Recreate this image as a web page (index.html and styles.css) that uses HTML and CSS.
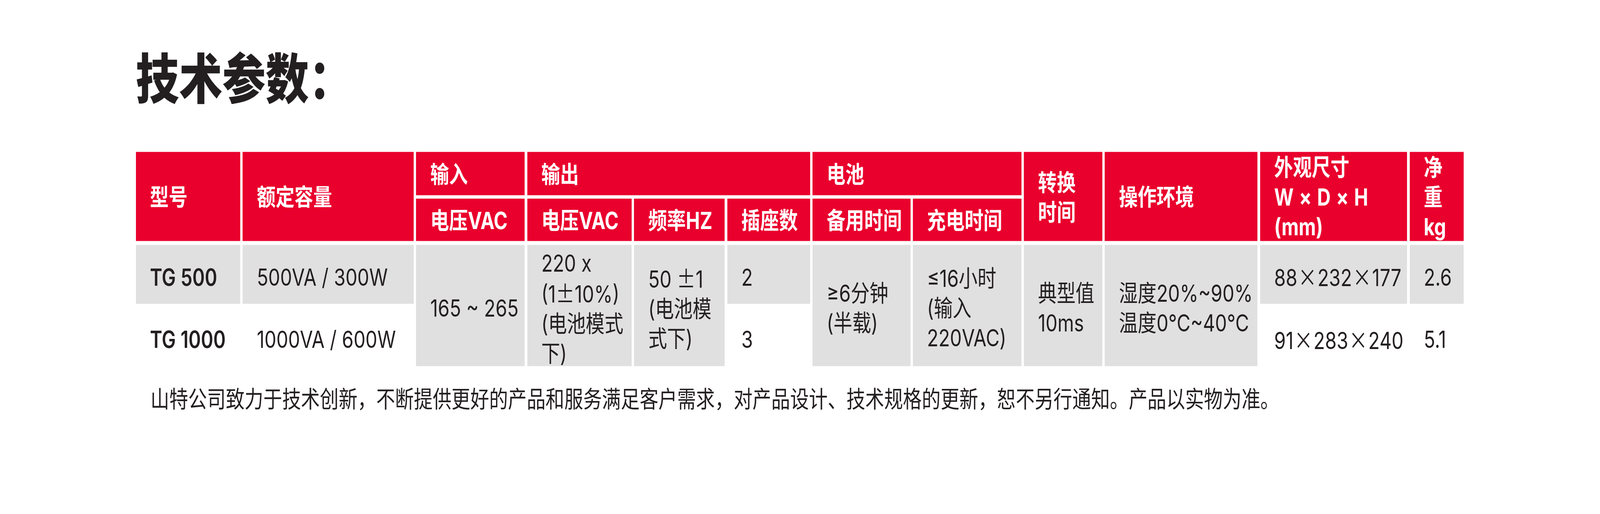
FILE: index.html
```html
<!DOCTYPE html>
<html lang="zh-CN">
<head>
<meta charset="utf-8">
<title>技术参数</title>
<link rel="stylesheet" href="styles.css">
</head>
<body>
<div class="page">
  <h1 class="title">技术参数：</h1>

  <div class="spec">
    <!-- header row 1 -->
    <div class="th c1 r12"><div>型号</div></div>
    <div class="th c2 r12"><div>额定容量</div></div>
    <div class="th c3 r1"><div>输入</div></div>
    <div class="th c-out r1"><div>输出</div></div>
    <div class="th c-bat r1"><div>电池</div></div>
    <div class="th c9 r12"><div>转换<br>时间</div></div>
    <div class="th c10 r12"><div>操作环境</div></div>
    <div class="th c11 r12"><div>外观尺寸<br><span class="wdh">W×D×H</span><br>(mm)</div></div>
    <div class="th c12 r12"><div>净<br>重<br>kg</div></div>

    <!-- header row 2 -->
    <div class="th c3 r2"><div>电压VAC</div></div>
    <div class="th c4 r2"><div>电压VAC</div></div>
    <div class="th c5 r2"><div>频率HZ</div></div>
    <div class="th c6 r2"><div>插座数</div></div>
    <div class="th c7 r2"><div>备用时间</div></div>
    <div class="th c8 r2"><div>充电时间</div></div>

    <!-- body row 1 -->
    <div class="td gray c1 r3 model"><div>TG 500</div></div>
    <div class="td gray c2 r3"><div>500VA / 300W</div></div>
    <div class="td gray c3 r34"><div>165 ~ 265</div></div>
    <div class="td gray c4 r34"><div>220 x<br>(1<span class="cjk">±</span>10%)<br>(电池模式<br>下)</div></div>
    <div class="td gray c5 r34"><div>50 <span class="cjk">±</span>1<br>(电池模<br>式下)</div></div>
    <div class="td gray c6 r3"><div>2</div></div>
    <div class="td gray c7 r34"><div>≥6分钟<br>(半载)</div></div>
    <div class="td gray c8 r34"><div>≤16小时<br>(输入<br>220VAC)</div></div>
    <div class="td gray c9 r34"><div>典型值<br>10ms</div></div>
    <div class="td gray c10 r34"><div>湿度20%~90%<br>温度0℃~40℃</div></div>
    <div class="td gray c11 r3"><div>88<span class="x">×</span>232<span class="x">×</span>177</div></div>
    <div class="td gray c12 r3"><div>2.6</div></div>

    <!-- body row 2 -->
    <div class="td c1 r4 model"><div>TG 1000</div></div>
    <div class="td c2 r4"><div>1000VA / 600W</div></div>
    <div class="td c6 r4"><div>3</div></div>
    <div class="td c11 r4"><div>91<span class="x">×</span>283<span class="x">×</span>240</div></div>
    <div class="td c12 r4"><div>5.1</div></div>
  </div>

  <p class="note">山特公司致力于技术创新，不断提供更好的产品和服务满足客户需求，对产品设计、技术规格的更新，恕不另行通知。产品以实物为准。</p>
</div>
</body>
</html>
```

FILE: styles.css
```css
html, body {
  margin: 0;
  padding: 0;
  background: #ffffff;
  overflow: hidden;
}

body {
  height: 1315px;
  color: #231f20;
  font-family: "Inter", "Noto Sans CJK SC", sans-serif;
}

/* Designed on a 5102px-wide canvas: fit its width to the window,
   keeping the vertical scale at 1. */
.page {
  --fit: tan(atan2(100vw, 5102px));
  box-sizing: border-box;
  width: 5102px;
  height: 1315px;
  padding: 123px 0 0 433px;
  zoom: var(--fit);
  transform-origin: 0 0;
  transform: scaleY(calc(1 / var(--fit)));
}

.title {
  margin: 0;
  font-family: "Noto Sans CJK SC", sans-serif;
  font-weight: 900;
  font-size: 138px;
  line-height: 138px;
  color: #231f20;
}

.spec {
  margin-top: 128px;
  display: grid;
  grid-template-columns: 333px 545px 346px 333px 289px 264px 312px 346px 250px 487px 469px 173px;
  grid-template-rows: 110px 109px 151px 151px;
  column-gap: 8px;
  row-gap: 9px;
  width: max-content;
}

.th,
.td {
  display: flex;
  align-items: center;
  padding-left: 45px;
  font-size: 60px;
  line-height: 76px;
  white-space: nowrap;
}

.th {
  background: #e9002d;
  color: #ffffff;
  font-weight: 700;
}

.th > div {
  transform: translateY(2px);
}

.td {
  color: #231f20;
  font-weight: 400;
}

/* the body copy sits slightly below the optical centre of its cell */
.td > div {
  transform: translateY(7px);
}

.gray {
  background: #e0e0e0;
}

.model {
  font-weight: 600;
}

.cjk,
.x {
  font-family: "Noto Sans CJK SC", sans-serif;
}

.x {
  margin: 0 2px;
}

.wdh {
  letter-spacing: 17px;
}

.c1 { grid-column: 1; }
.c2 { grid-column: 2; }
.c3 { grid-column: 3; }
.c4 { grid-column: 4; }
.c5 { grid-column: 5; }
.c6 { grid-column: 6; }
.c7 { grid-column: 7; }
.c8 { grid-column: 8; }
.c9 { grid-column: 9; }
.c10 { grid-column: 10; }
.c11 { grid-column: 11; }
.c12 { grid-column: 12; }
.c-out { grid-column: 4 / 7; }
.c-bat { grid-column: 7 / 9; }

.r1 { grid-row: 1; }
.r2 { grid-row: 2; }
.r3 { grid-row: 3; }
.r4 { grid-row: 4; }
.r12 { grid-row: 1 / 3; }
.r34 { grid-row: 3 / 5; }

.note {
  margin: 50px 0 0 47px;
  font-family: "Noto Sans CJK SC", sans-serif;
  font-size: 60px;
  line-height: 60px;
  font-weight: 400;
  color: #231f20;
}
```
